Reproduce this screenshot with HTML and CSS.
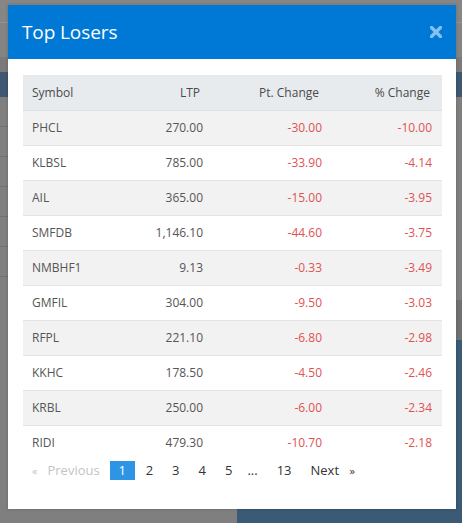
FILE: index.html
```html
<!DOCTYPE html>
<html>
<head>
<meta charset="utf-8">
<link rel="stylesheet" href="styles.css">
</head>
<body>
<div class="backdrop">
  <div class="bg-top"></div>
  <div class="bg-band"></div>
  <div class="bg-rows">
    <div class="bg-left">
      <div class="bg-row"></div>
      <div class="bg-row"></div>
      <div class="bg-row"></div>
      <div class="bg-row"></div>
      <div class="bg-row"></div>
      <div class="bg-row"></div>
    </div>
    <div class="bg-right">
      <div class="bg-right-grey"></div>
      <div class="bg-right-blue"></div>
    </div>
  </div>
</div>

<div class="modal">
  <div class="modal-header">
    <h1 class="modal-title">Top Losers</h1>
    <svg class="modal-close" width="12" height="12" viewBox="0 0 12 12" aria-label="Close">
      <path d="M1.5 1.5 L10.5 10.5 M10.5 1.5 L1.5 10.5" stroke="#86c2ef" stroke-width="3.2" stroke-linecap="round" fill="none"/>
    </svg>
  </div>
  <div class="modal-body">
    <table class="losers">
      <thead>
        <tr><th class="c-sym">Symbol</th><th class="c-ltp">LTP</th><th class="c-pt">Pt. Change</th><th class="c-pc">% Change</th></tr>
      </thead>
      <tbody>
        <tr><td>PHCL</td><td class="num">270.00</td><td class="neg">-30.00</td><td class="neg">-10.00</td></tr>
        <tr><td>KLBSL</td><td class="num">785.00</td><td class="neg">-33.90</td><td class="neg">-4.14</td></tr>
        <tr><td>AIL</td><td class="num">365.00</td><td class="neg">-15.00</td><td class="neg">-3.95</td></tr>
        <tr><td>SMFDB</td><td class="num">1,146.10</td><td class="neg">-44.60</td><td class="neg">-3.75</td></tr>
        <tr><td>NMBHF1</td><td class="num">9.13</td><td class="neg">-0.33</td><td class="neg">-3.49</td></tr>
        <tr><td>GMFIL</td><td class="num">304.00</td><td class="neg">-9.50</td><td class="neg">-3.03</td></tr>
        <tr><td>RFPL</td><td class="num">221.10</td><td class="neg">-6.80</td><td class="neg">-2.98</td></tr>
        <tr><td>KKHC</td><td class="num">178.50</td><td class="neg">-4.50</td><td class="neg">-2.46</td></tr>
        <tr><td>KRBL</td><td class="num">250.00</td><td class="neg">-6.00</td><td class="neg">-2.34</td></tr>
        <tr><td>RIDI</td><td class="num">479.30</td><td class="neg">-10.70</td><td class="neg">-2.18</td></tr>
      </tbody>
    </table>
    <div class="pager">
      <span class="pg disabled prev-arrow">&laquo;</span>
      <span class="pg disabled prev">Previous</span>
      <span class="pg active">1</span>
      <span class="pg first">2</span>
      <span class="pg">3</span>
      <span class="pg">4</span>
      <span class="pg">5</span>
      <span class="pg dots">...</span>
      <span class="pg">13</span>
      <span class="pg">Next</span>
      <span class="pg next-arrow">&raquo;</span>
    </div>
  </div>
</div>
</body>
</html>
```

FILE: styles.css
```css
* { box-sizing: border-box; }
html, body { margin: 0; padding: 0; }
body {
  width: 462px;
  height: 523px;
  overflow: hidden;
  background: #7f7f7f;
  font-family: "Open Sans", "Liberation Sans", sans-serif;
  position: relative;
}

/* dimmed page behind the modal */
.backdrop { height: 523px; display: flex; flex-direction: column; }
.bg-top {
  height: 72px;
  background: linear-gradient(#868686 0 22px, #939393 22px 23px, #848484 23px 57px, #7a7a7a 57px 72px);
}
.bg-band {
  height: 25px;
  background: #3d5870;
}
.bg-rows { flex: 1; display: flex; }
.bg-left { width: 237px; display: flex; flex-direction: column; background: #7f7f7f; }
.bg-row {
  height: 30px;
  border-bottom: 1px solid #727272;
}
.bg-right { flex: 1; display: flex; flex-direction: column; }
.bg-right-grey { height: 243px; background: linear-gradient(#7f7f7f 0 203px, #717171 203px 243px); }
.bg-right-blue { flex: 1; background: #3b5a75; }

/* modal */
.modal {
  position: absolute;
  left: 8px;
  top: 5px;
  width: 448px;
  height: 504px;
  background: #fff;
  box-shadow: 0 0 3px rgba(0,0,0,0.2);
}
.modal-header {
  height: 54px;
  background: #0079d6;
  display: flex;
  align-items: center;
  justify-content: space-between;
  padding: 0 14px 0 14px;
}
.modal-title {
  margin: 0;
  font-size: 19px;
  font-weight: 400;
  color: #fff;
  letter-spacing: -0.1px;
}
.modal-close { display: block; }
.modal-body { padding: 16px 14px 0 15px; }

.losers {
  width: 419px;
  border-collapse: collapse;
  table-layout: fixed;
  font-size: 12px;
  color: #555;
}
.losers th {
  height: 35px;
  background: #e8ebee;
  font-weight: 500;
  color: #4a4a4a;
  text-align: right;
  padding: 0 12px 0 9px;
  border-bottom: 1px solid #dde1e5;
}
.losers th.c-sym { text-align: left; width: 100px; }
.losers th.c-ltp { width: 89px; }
.losers th.c-pt { width: 119px; }
.losers th.c-pc { width: 111px; }
.losers td {
  height: 35px;
  padding: 0 9px 0 9px;
  text-align: right;
  border-bottom: 1px solid #e3e3e3;
}
.losers td:first-child { text-align: left; }
.losers td:last-child { padding-right: 10px; }
.losers tbody tr:nth-child(odd) td { background: #f2f2f2; }
.losers tbody tr:last-child td { border-bottom: 0; background: #fff; }
.losers td.neg { color: #e05252; }

.pager {
  display: flex;
  align-items: center;
  margin-top: 1px;
  padding-left: 9px;
  font-size: 13px;
  color: #333;
  height: 19px;
}
.pg { padding: 0 9.5px; line-height: 19px; }
.pg.disabled { color: #c4c4c4; }
.pg.prev-arrow { font-size: 11px; padding: 0; margin-right: 10px; }
.pg.prev { padding: 0; margin-right: 10px; }
.pg.first { margin-left: 1.5px; }
.pg.dots { margin-left: -4px; }
.pg.next-arrow { font-size: 11px; padding: 0; margin-left: 1px; }
.pg.active {
  background: #2d95e3;
  color: #fff;
  width: 25px;
  text-align: center;
  padding: 0;
}
```
